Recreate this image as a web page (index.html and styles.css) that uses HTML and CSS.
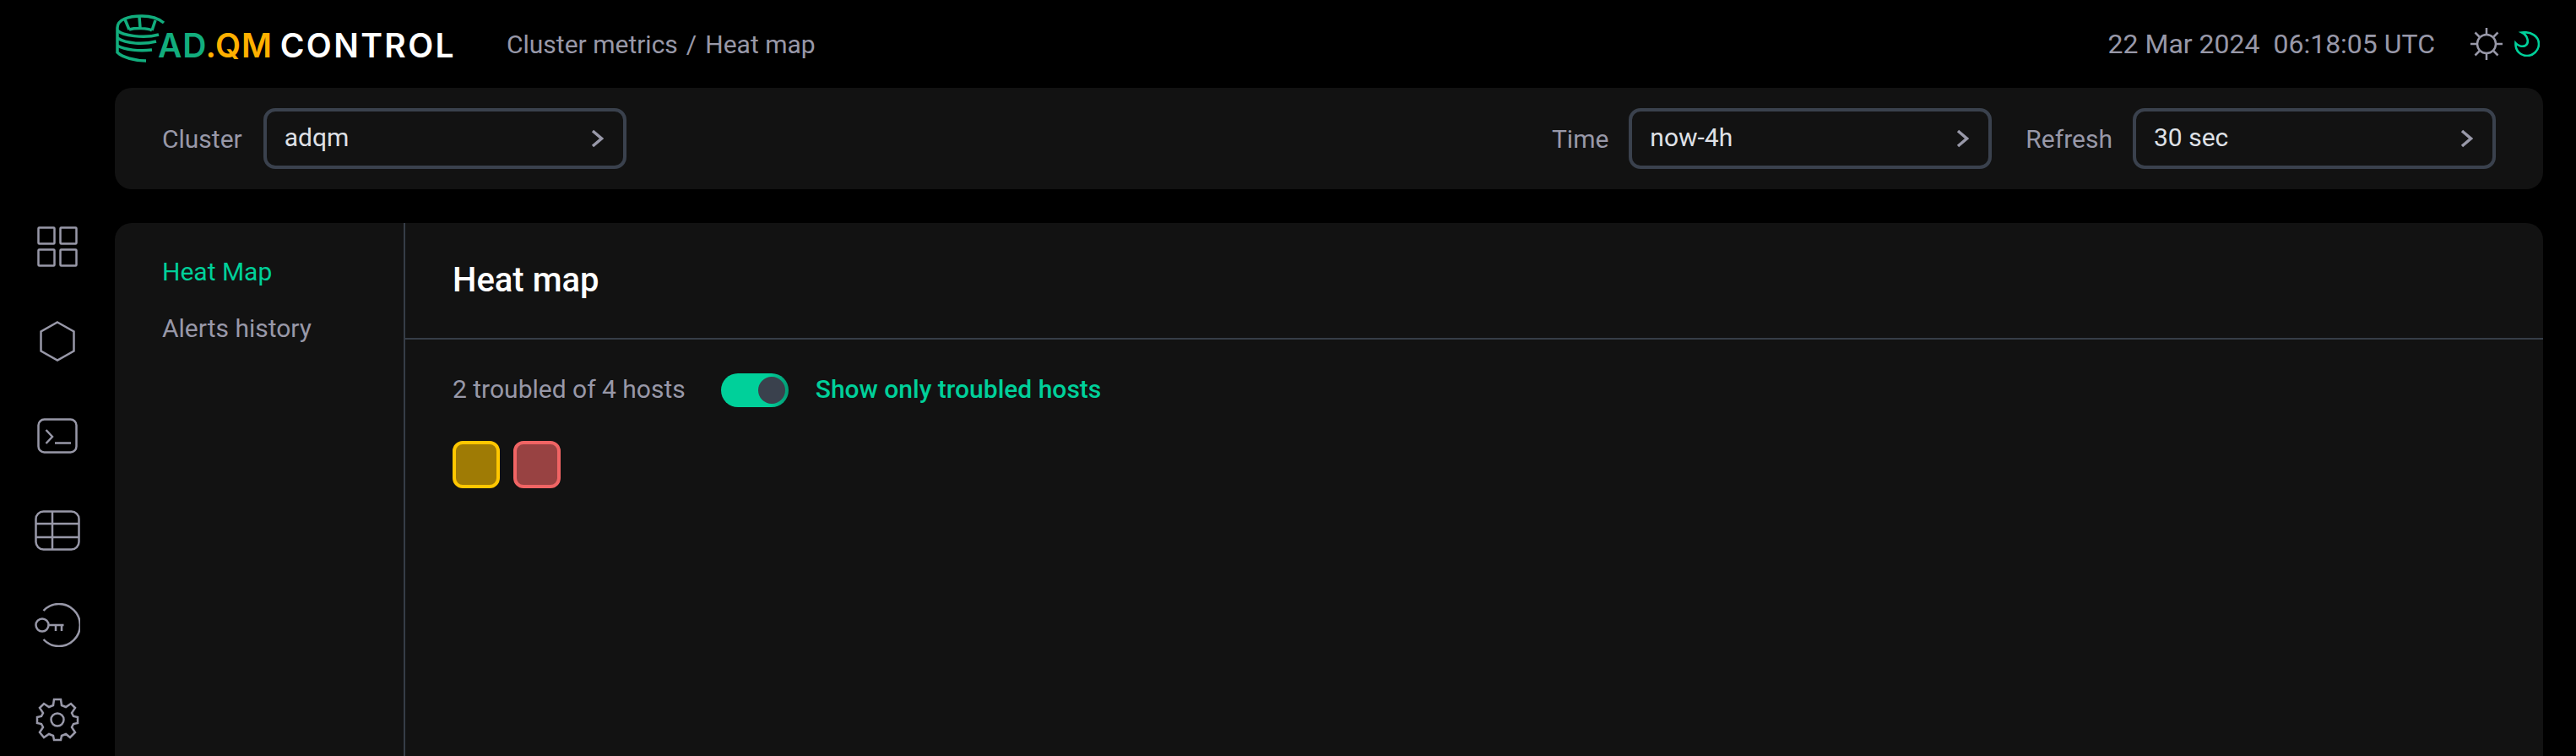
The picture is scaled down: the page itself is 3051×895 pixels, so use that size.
FILE: index.html
```html
<!DOCTYPE html>
<html lang="en">
<head>
    <meta charset="UTF-8">
    <title>ADQM Control</title>
    <link rel="stylesheet" href="styles.css">
</head>
<body>
    <header class="topbar">
        <div class="logo">
            <svg class="logo-mark" viewBox="6 4 60 58" fill="none" stroke="#12ad7d" stroke-width="3.5">
                <path d="M64 15C58 10 48 7 38 7C22 7 9 11 9 21V50C15 56 30 60 43 60"/>
                <path d="M9 24C15 30 40 34 58 29M9 33C20 40 40 41 55 37M9 42C18 47 35 49 50 47"/>
                <path d="M23 23C30 21 45 21 50 24M18 11L23 23M35 8L36 21M54 12L50 24"/>
            </svg>
            <span class="logo-text"><span class="logo-ad">AD</span><span class="logo-qm">.QM</span><span class="logo-name">CONTROL</span></span>
        </div>
        <div class="crumbs">
            <span>Cluster metrics</span>
            <span>/</span>
            <span>Heat map</span>
        </div>
        <div class="clock">22 Mar 2024&nbsp; 06:18:05 UTC</div>
        <svg class="sun" viewBox="0 0 38 38" fill="none" stroke="#9898a8" stroke-width="2.500">
            <circle cx="19" cy="19" r="11"/>
            <path d="M19 0V7M19 31V38M0 19H7M31 19H38M5.500 5.500L10.500 10.500M27.500 27.500L32.500 32.500M5.500 32.500L10.500 27.500M27.500 10.500L32.500 5.500"/>
        </svg>
        <svg class="moon" viewBox="0 0 30 30" fill="none" stroke="#00d09a" stroke-width="2.600">
            <path d="M9 1.500C20 0 29 6 29 15C29 23 22 29 15 29C7 29 1 23 1.500 14C4 17 9 19 13 17C18 14 16 5 9 1.500Z"/>
        </svg>
    </header>

    <div class="layout">
        <nav class="rail">
            <div class="rail-item">
                <svg class="icon-grid" viewBox="0 0 48 48" fill="none" stroke="#9898a8" stroke-width="2.500">
                    <rect x="1.500" y="1.500" width="19" height="19" rx="1"/>
                    <rect x="27.500" y="1.500" width="19" height="19" rx="1"/>
                    <rect x="1.500" y="27.500" width="19" height="19" rx="1"/>
                    <rect x="27.500" y="27.500" width="19" height="19" rx="1"/>
                </svg>
            </div>
            <div class="rail-item">
                <svg class="icon-hex" viewBox="0 0 44 48" fill="none" stroke="#9898a8" stroke-width="2.500">
                    <path d="M22 1.500L41.500 12.500V35.500L22 46.500L2.500 35.500V12.500Z"/>
                </svg>
            </div>
            <div class="rail-item">
                <svg class="icon-term" viewBox="0 0 48 42" fill="none" stroke="#9898a8" stroke-width="2.500">
                    <rect x="1.500" y="1.500" width="45" height="39" rx="7"/>
                    <path d="M10.500 14L18 22L10.500 30M21 29.500H40"/>
                </svg>
            </div>
            <div class="rail-item">
                <svg class="icon-table" viewBox="0 0 54 48" fill="none" stroke="#9898a8" stroke-width="2.500">
                    <rect x="1.500" y="1.500" width="51" height="45" rx="9"/>
                    <path d="M1.500 16H52.500M1.500 32H52.500M21 1.500V46.500"/>
                </svg>
            </div>
            <div class="rail-item">
                <svg class="icon-key" viewBox="0 0 54 52" fill="none" stroke="#9898a8" stroke-width="2.500">
                    <circle cx="9" cy="26" r="7.500"/>
                    <path d="M16.500 26H34.500M25 26V33M32 26V33"/>
                    <path d="M10.500 9A25 25 0 1 1 10.500 43"/>
                </svg>
            </div>
            <div class="rail-item">
                <svg class="icon-gear" viewBox="0 0 52 52" fill="none" stroke="#9898a8" stroke-width="2.500">
                    <circle cx="26" cy="26" r="7.500"/>
                    <path d="M22 2H30L31 9L36 11L42 7L47 12L43 18L45 22L50 23V30L45 31L43 35L47 41L41 47L36 43L31 45L30 50H22L21 45L16 43L10 47L5 41L9 35L7 31L2 30V23L7 22L9 18L5 12L10 7L16 11L21 9Z"/>
                </svg>
            </div>
        </nav>

        <main class="content">
            <section class="panel filters">
                <div class="field field-cluster">
                    <label class="field-label">Cluster</label>
                    <div class="select">
                        <span class="select-value">adqm</span>
                        <svg class="chevron" viewBox="0 0 15 22" fill="none" stroke="#9898a8" stroke-width="3.500"><path d="M2 2L12.500 11L2 20"/></svg>
                    </div>
                </div>
                <div class="field field-time">
                    <label class="field-label">Time</label>
                    <div class="select">
                        <span class="select-value">now-4h</span>
                        <svg class="chevron" viewBox="0 0 15 22" fill="none" stroke="#9898a8" stroke-width="3.500"><path d="M2 2L12.500 11L2 20"/></svg>
                    </div>
                </div>
                <div class="field">
                    <label class="field-label">Refresh</label>
                    <div class="select">
                        <span class="select-value">30 sec</span>
                        <svg class="chevron" viewBox="0 0 15 22" fill="none" stroke="#9898a8" stroke-width="3.500"><path d="M2 2L12.500 11L2 20"/></svg>
                    </div>
                </div>
            </section>

            <section class="panel body">
                <aside class="side">
                    <a class="side-link active">Heat Map</a>
                    <a class="side-link">Alerts history</a>
                </aside>
                <div class="main">
                    <h1 class="title">Heat map</h1>
                    <div class="inner">
                        <div class="summary">
                            <span class="count">2 troubled of 4 hosts</span>
                            <span class="switch"><span class="knob"></span></span>
                            <span class="switch-label">Show only troubled hosts</span>
                        </div>
                        <div class="hosts">
                            <div class="host host-warn"></div>
                            <div class="host host-crit"></div>
                        </div>
                    </div>
                </div>
            </section>
        </main>
    </div>
</body>
</html>
```

FILE: styles.css
```css
html, body {
    height: 100%;
}
body {
    margin: 0;
    background-color: #000;
    font-family: Roboto, sans-serif;
    font-size: 30px;
    color: #9898a8;
    overflow: hidden;
}
.topbar {
    height: 104px;
    display: flex;
    align-items: center;
    padding: 0 43px 0 136px;
    box-sizing: border-box;
}
.logo {
    display: flex;
    align-items: flex-start;
    width: 464px;
    height: 104px;
    flex-shrink: 0;
}
.logo-mark {
    width: 60px;
    height: 58px;
    margin-top: 16px;
    flex-shrink: 0;
}
.logo-text {
    font-family: Inter, sans-serif;
    font-weight: 600;
    font-size: 39px;
    line-height: 38px;
    color: #fff;
    margin: 35px 0 0 -9px;
    white-space: nowrap;
    letter-spacing: 0.800px;
}
.logo-ad {
    color: #12ad7d;
}
.logo-qm {
    color: #ffb000;
}
.logo-name {
    letter-spacing: 2.400px;
    margin-left: 9px;
}
.crumbs {
    flex: 1;
    display: flex;
    gap: 10px;
}
.clock {
    font-size: 32px;
    margin-right: 42px;
}
.sun {
    width: 38px;
    height: 38px;
    margin-right: 14px;
}
.moon {
    width: 30px;
    height: 30px;
}
.layout {
    display: flex;
    height: 791px;
}
.rail {
    width: 136px;
    flex-shrink: 0;
    padding-top: 132px;
    box-sizing: border-box;
}
.rail-item {
    height: 112px;
    display: flex;
    align-items: center;
    justify-content: center;
}
.icon-grid {
    width: 48px;
    height: 48px;
}
.icon-hex {
    width: 44px;
    height: 48px;
}
.icon-term {
    width: 48px;
    height: 42px;
}
.icon-table {
    width: 54px;
    height: 48px;
}
.icon-key {
    width: 54px;
    height: 52px;
}
.icon-gear {
    width: 52px;
    height: 52px;
}
.content {
    flex: 1;
    padding-right: 39px;
    display: flex;
    flex-direction: column;
    gap: 40px;
    min-width: 0;
}
.panel {
    background-color: #121212;
    border-radius: 20px;
}
.filters {
    height: 120px;
    flex-shrink: 0;
    display: flex;
    align-items: center;
    padding: 0 56px;
    gap: 40px;
    box-sizing: border-box;
}
.field {
    display: flex;
    align-items: center;
    gap: 24px;
}
.field-cluster {
    gap: 25px;
}
.field-time {
    margin-left: auto;
}
.select {
    width: 430px;
    height: 72px;
    box-sizing: border-box;
    border: 4px solid #3a414d;
    border-radius: 14px;
    padding: 0 23px 0 21px;
    display: flex;
    align-items: center;
    justify-content: space-between;
    color: #dfe0e6;
}
.select-value {
    margin-top: -3px;
}
.chevron {
    width: 15px;
    height: 22px;
}
.body {
    flex: 1;
    display: flex;
    border-bottom-left-radius: 0;
    border-bottom-right-radius: 0;
}
.side {
    width: 286px;
    flex-shrink: 0;
    border-right: 2px solid #363d47;
    padding: 40px 0 0 56px;
    display: flex;
    flex-direction: column;
    gap: 31px;
}
.side-link {
    line-height: 36px;
}
.active {
    color: #00d09a;
}
.main {
    flex: 1;
}
.title {
    margin: 0;
    height: 136px;
    border-bottom: 2px solid #363d47;
    padding-left: 56px;
    line-height: 136px;
    color: #fff;
    font-size: 40px;
    font-weight: 500;
}
.inner {
    padding: 40px 56px;
}
.summary {
    display: flex;
    align-items: center;
}
.count {
    margin-right: 42px;
    margin-top: -3px;
}
.switch {
    width: 80px;
    height: 40px;
    border-radius: 20px;
    background: linear-gradient(90deg, #00d09a 70%, #049a74 100%);
    display: flex;
    align-items: center;
    justify-content: flex-end;
    padding: 0 4px;
    box-sizing: border-box;
    margin-right: 32px;
}
.knob {
    width: 32px;
    height: 32px;
    border-radius: 50%;
    background-color: #3a414d;
}
.switch-label {
    color: #00d09a;
    font-weight: 500;
    margin-top: -3px;
}
.hosts {
    display: flex;
    gap: 16px;
    margin-top: 40px;
}
.host {
    width: 56px;
    height: 56px;
    box-sizing: border-box;
    border-radius: 12px;
    border: 4px solid;
}
.host-warn {
    border-color: #ffc700;
    background-color: #9f7b05;
}
.host-crit {
    border-color: #f06464;
    background-color: #984242;
}
```
